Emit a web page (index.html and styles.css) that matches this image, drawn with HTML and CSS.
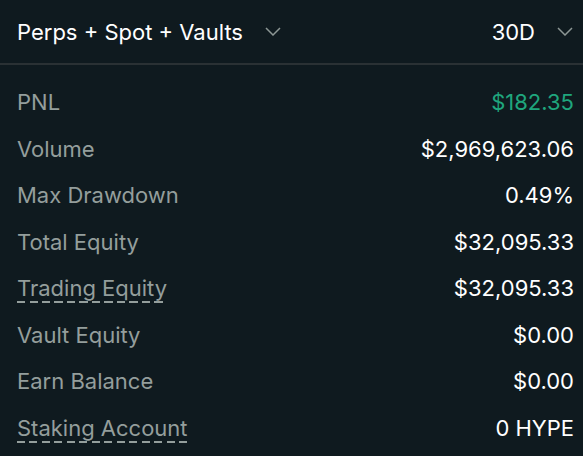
FILE: index.html
```html
<!DOCTYPE html>
<html>
<head>
<meta charset="utf-8">
<link rel="stylesheet" href="styles.css">
</head>
<body>
<div class="panel">
  <div class="header">
    <div class="select">
      <span class="select-label">Perps + Spot + Vaults</span>
      <svg class="chev" width="16" height="9" viewBox="0 0 16 9"><path d="M1 1 L8 8 L15 1" fill="none" stroke="#8c9694" stroke-width="1.5"/></svg>
    </div>
    <div class="select">
      <span class="select-label">30D</span>
      <svg class="chev" width="16" height="9" viewBox="0 0 16 9"><path d="M1 1 L8 8 L15 1" fill="none" stroke="#8c9694" stroke-width="1.5"/></svg>
    </div>
  </div>
  <div class="rows">
    <div class="row"><span class="label">PNL</span><span class="value green">$182.35</span></div>
    <div class="row"><span class="label">Volume</span><span class="value">$2,969,623.06</span></div>
    <div class="row"><span class="label">Max Drawdown</span><span class="value">0.49%</span></div>
    <div class="row"><span class="label">Total Equity</span><span class="value">$32,095.33</span></div>
    <div class="row"><span class="label dashed">Trading Equity</span><span class="value">$32,095.33</span></div>
    <div class="row"><span class="label">Vault Equity</span><span class="value">$0.00</span></div>
    <div class="row"><span class="label">Earn Balance</span><span class="value">$0.00</span></div>
    <div class="row"><span class="label dashed">Staking Account</span><span class="value">0 HYPE</span></div>
  </div>
</div>
</body>
</html>
```
FILE: styles.css
```css
html, body {
  margin: 0;
  padding: 0;
  background: #0f1a1f;
}
body {
  font-family: Inter, "Noto Sans", sans-serif;
  color: #ffffff;
  width: 583px;
  height: 456px;
  overflow: hidden;
}
.header {
  height: 63px;
  display: flex;
  justify-content: space-between;
  align-items: center;
  padding: 0 10px 0 17px;
  border-bottom: 2px solid #2a3134;
}
.select {
  display: flex;
  align-items: center;
  gap: 22px;
}
.select-label {
  font-size: 22px;
  color: #ffffff;
}
.chev {
  display: block;
}
.rows {
  padding: 14px 9px 0 17px;
}
.row {
  height: 46.5px;
  display: flex;
  justify-content: space-between;
  align-items: center;
  font-size: 22px;
}
.label {
  color: #949e9c;
}
.label.dashed {
  padding-bottom: 2px;
  margin-bottom: -2px;
  background-image: repeating-linear-gradient(to right, #949e9c 0 8px, transparent 8px 12.5px);
  background-size: 100% 2px;
  background-position: 0 100%;
  background-repeat: no-repeat;
}
.value {
  color: #ffffff;
}
.value.green {
  color: #1fa67d;
}
```
